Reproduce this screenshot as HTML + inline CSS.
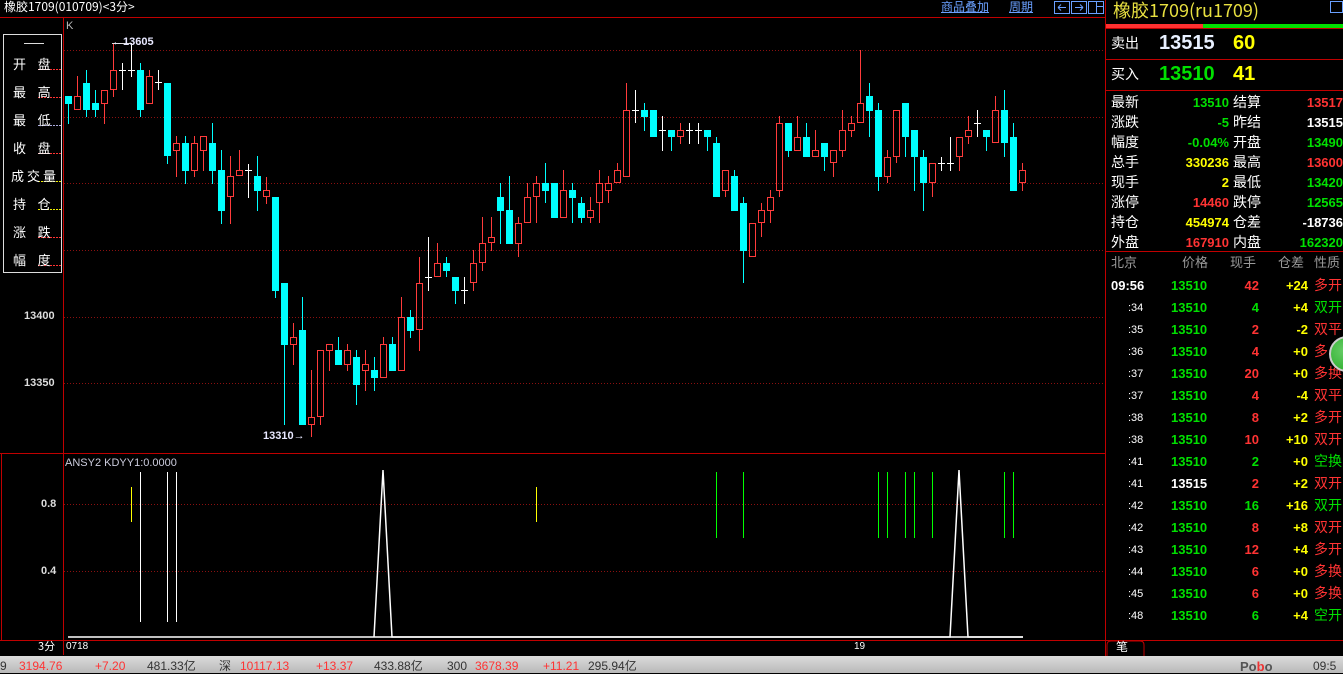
<!DOCTYPE html>
<html><head><meta charset="utf-8">
<style>
*{margin:0;padding:0;box-sizing:border-box}
body{width:1343px;height:673px;background:#000;overflow:hidden;position:relative;font-family:"Liberation Sans","Noto Sans CJK SC",sans-serif;color:#fff}
.a{position:absolute;white-space:nowrap;line-height:1}
.cjk{font-family:"Noto Sans CJK SC","WenQuanYi Zen Hei",sans-serif}
.num{font-family:"Liberation Sans",sans-serif;font-weight:bold}
.g{color:#00e000}.r{color:#ff3333}.y{color:#ffff00}.w{color:#fff}.gr{color:#9a9a9a}
</style></head><body>
<svg id="s" class="a" style="left:0;top:0" width="1343" height="673" xmlns="http://www.w3.org/2000/svg"></svg>

<div class="a cjk" style="left:4px;top:1px;font-size:12px">橡胶1709(010709)&lt;3分&gt;</div>
<div class="a cjk" style="left:941px;top:1px;font-size:12px;color:#6aa0ff;text-decoration:underline">商品叠加</div>
<div class="a cjk" style="left:1009px;top:1px;font-size:12px;color:#6aa0ff;text-decoration:underline">周期</div>
<div class="a" style="left:66px;top:21px;font-size:11px;color:#bbb">K</div>
<div class="a num" style="left:112px;top:37px;font-size:11px;color:#e8e8ff">←13605</div>
<div class="a num" style="left:263px;top:431px;font-size:11px;color:#e8e8ff">13310→</div>
<div class="a num" style="left:24px;top:311px;font-size:11px;color:#ddd">13400</div>
<div class="a num" style="left:24px;top:378px;font-size:11px;color:#ddd">13350</div>
<div class="a num" style="left:41px;top:499px;font-size:11px;color:#ddd">0.8</div>
<div class="a num" style="left:41px;top:566px;font-size:11px;color:#ddd">0.4</div>
<div class="a" style="left:65px;top:458px;font-size:11px;color:#ccd">ANSY2 KDYY1:0.0000</div>
<div class="a cjk" style="left:38px;top:641px;font-size:11px">3分</div>
<div class="a" style="left:66px;top:642px;font-size:10px">0718</div>
<div class="a" style="left:854px;top:642px;font-size:10px">19</div>

<div class="a cjk" style="left:13px;top:50px;font-size:13px;line-height:28px;letter-spacing:0">
<div>开&nbsp;&nbsp;&nbsp;&nbsp;盘</div><div>最&nbsp;&nbsp;&nbsp;&nbsp;高</div><div>最&nbsp;&nbsp;&nbsp;&nbsp;低</div><div>收&nbsp;&nbsp;&nbsp;&nbsp;盘</div><div style="margin-left:-2px;letter-spacing:3px">成交量</div><div>持&nbsp;&nbsp;&nbsp;&nbsp;仓</div><div>涨&nbsp;&nbsp;&nbsp;&nbsp;跌</div><div>幅&nbsp;&nbsp;&nbsp;&nbsp;度</div></div>

<div class="a cjk" style="left:1113px;top:1px;font-size:18px;color:#e8e040">橡胶1709(ru1709)</div>
<div class="a cjk" style="left:1111px;top:36px;font-size:14px">卖出</div>
<div class="a num" style="left:1159px;top:33px;font-size:20px;color:#e8f0ff">13515</div>
<div class="a num y" style="left:1233px;top:33px;font-size:20px">60</div>
<div class="a cjk" style="left:1111px;top:67px;font-size:14px">买入</div>
<div class="a num g" style="left:1159px;top:64px;font-size:20px">13510</div>
<div class="a num y" style="left:1233px;top:64px;font-size:20px">41</div>
<div class="a" style="left:1110px;top:93px;width:233px;font-size:14px;line-height:20px" id="stats"></div>
<div class="a cjk gr" style="left:1111px;top:255px;font-size:13px">北京</div>
<div class="a cjk gr" style="left:1182px;top:255px;font-size:13px">价格</div>
<div class="a cjk gr" style="left:1230px;top:255px;font-size:13px">现手</div>
<div class="a cjk gr" style="left:1278px;top:255px;font-size:13px">仓差</div>
<div class="a cjk gr" style="left:1314px;top:255px;font-size:13px">性质</div>
<div class="a" style="left:1108px;top:276px;width:235px;font-size:13px;line-height:22px" id="trades"></div>
<div class="a" style="left:1329px;top:336px;width:36px;height:36px;border-radius:50%;background:radial-gradient(circle at 40% 40%,#6c6,#2a2);border:2px solid #ccc"></div>
<div class="a cjk" style="left:1116px;top:641px;font-size:12px">笔</div>

<div class="a" style="left:0;top:656px;width:1343px;height:17px;background:linear-gradient(#dcdcdc,#b8b8b8)"></div>
<div class="a num" style="left:0;top:660px;font-size:12px;font-weight:normal;width:1343px">
<span class="a" style="left:0;color:#333">9</span>
<span class="a r" style="left:19px">3194.76</span>
<span class="a r" style="left:95px">+7.20</span>
<span class="a" style="left:147px;color:#333">481.33<span class="cjk">亿</span></span>
<span class="a cjk" style="left:219px;color:#333">深</span>
<span class="a r" style="left:240px">10117.13</span>
<span class="a r" style="left:316px">+13.37</span>
<span class="a" style="left:374px;color:#333">433.88<span class="cjk">亿</span></span>
<span class="a" style="left:447px;color:#333">300</span>
<span class="a r" style="left:475px">3678.39</span>
<span class="a r" style="left:543px">+11.21</span>
<span class="a" style="left:588px;color:#333">295.94<span class="cjk">亿</span></span>
<span class="a" style="left:1240px;color:#555;font-weight:bold;font-size:13px">Po<span style="color:#e33">b</span>o</span>
<span class="a" style="left:1313px;color:#333">09:5</span>
</div>

<script>
var s=document.getElementById('s'),h='';
function L(x1,y1,x2,y2,c,w,d){h+='<line x1="'+x1+'" y1="'+y1+'" x2="'+x2+'" y2="'+y2+'" stroke="'+c+'" stroke-width="'+(w||1)+'"'+(d?' stroke-dasharray="'+d+'"':'')+'/>';}
function R(x,y,w,hh,f,st){h+='<rect x="'+x+'" y="'+y+'" width="'+w+'" height="'+hh+'" fill="'+(f||'none')+'"'+(st?' stroke="'+st+'"':'')+'/>';}
[50,117,183,250,317,383,504,571].forEach(function(y){L(64,y+.5,1105,y+.5,'#8b1010',1,'1 2');});
var red='#c00000';
L(0,17.5,1105,17.5,red);L(63.5,18,63.5,655,red);L(0,453.5,1105,453.5,red);L(0,640.5,1105,640.5,red);
L(1105.5,0,1105.5,673,red);L(1.5,453,1.5,640,red);
R(3.5,34.5,58,238,null,'#ddd');
L(24,43.5,44,43.5,'#ddd');
var legc=['#f33','#f33','#aad','#f33','#ee0','#ee0','#f33','#f33'];
legc.forEach(function(c,i){L(38,69.5+i*28,61,69.5+i*28,c,1,'2 1');});
R(1106,24,97,4,'#ff3030');R(1203,24,140,4,'#00e000');
[28,59,90,251].forEach(function(y){L(1106,y+.5,1343,y+.5,red);});
L(1106,640.5,1343,640.5,red);
h+='<path d="M1107 656V645Q1107 641 1111 641H1140Q1144 641 1144 645V656" fill="none" stroke="'+red+'"/>';
[1054,1071,1088].forEach(function(x){R(x+.5,1.5,15,12,null,'#6aa0ff');});
h+='<path d="M1058 7.5h8M1058 7.5l3-3M1058 7.5l3 3M1083 7.5h-8M1083 7.5l-3-3M1083 7.5l-3 3" stroke="#6aa0ff" fill="none"/>';
L(1096.5,2,1096.5,13,'#6aa0ff');L(1096,6.5,1103,6.5,'#6aa0ff');
R(1330.5,1.5,12,11,null,'#6aa0ff');
var C=[['c',96,104,96,124],['r',96,110,76,110],['c',83,110,70,117],['c',103,110,90,117],['r',90,104,90,124],['r',70,90,43,97],['w',70,70,63,90],['w',70,70,43,77],['c',70,110,63,117],['r',76,104,70,104],['w',82,82,70,90],['c',83,156,83,164],['r',143,151,136,177],['c',143,171,136,184],['r',143,171,136,177],['r',136,151,136,171],['c',143,171,123,184],['c',170,211,150,224],['r',176,197,156,224],['r',170,176,150,176],['w',170,170,164,198],['c',176,191,156,211],['r',190,197,177,204],['c',197,291,197,298],['c',283,345,283,425],['r',337,345,323,365],['c',330,425,297,425],['r',417,425,370,437],['r',350,417,350,425],['r',344,351,344,371],['c',350,365,337,365],['r',350,365,344,371],['c',357,385,350,405],['r',364,371,350,391],['c',370,378,357,391],['r',344,378,337,378],['c',344,371,337,371],['r',317,371,297,371],['c',317,331,310,338],['r',283,330,257,351],['w',277,277,237,291],['r',263,277,243,277],['c',263,271,257,277],['c',277,291,277,304],['w',290,290,277,304],['r',263,283,250,291],['r',243,263,217,271],['r',237,243,217,251],['c',197,211,183,244],['c',210,244,176,244],['r',223,244,217,257],['r',197,223,183,223],['r',183,197,176,223],['c',183,191,163,203],['c',183,218,183,218],['r',190,218,170,218],['c',190,198,183,223],['c',203,218,197,223],['r',210,218,197,223],['r',183,203,170,223],['r',183,191,176,203],['r',170,183,163,183],['r',110,177,83,177],['w',110,110,90,123],['c',110,117,103,131],['c',110,137,110,137],['w',130,130,116,151],['c',130,137,130,151],['r',130,137,123,144],['w',130,130,123,144],['w',130,130,123,144],['c',130,137,130,151],['c',143,197,137,197],['r',170,191,170,197],['c',176,211,170,211],['c',203,251,197,283],['r',223,257,223,257],['r',210,223,203,237],['r',197,211,190,223],['r',123,191,116,197],['c',123,151,123,157],['r',137,151,116,151],['c',137,157,123,157],['r',150,157,130,157],['c',143,157,143,171],['r',150,163,150,177],['r',130,151,110,157],['r',123,131,116,137],['r',103,123,50,123],['c',96,111,83,137],['c',110,177,103,191],['r',157,177,150,183],['r',110,157,110,163],['c',103,137,103,157],['c',130,157,130,191],['c',157,183,150,211],['r',163,183,163,197],['w',163,163,157,171],['w',163,163,137,171],['r',137,157,137,171],['r',130,137,116,144],['w',123,123,110,137],['c',130,137,130,151],['r',110,143,96,143],['c',110,143,90,157],['c',137,191,123,191],['r',170,183,163,191]];
C.forEach(function(c,i){var x=68+9*i,t=c[0];
 if(t=='c'){L(x+.5,c[3],x+.5,c[4],'#00ffff');R(x-3,c[1],7,Math.max(c[2]-c[1],2),'#00ffff');}
 else if(t=='r'){L(x+.5,c[3],x+.5,c[1],'#ff3b3b');L(x+.5,c[2],x+.5,c[4],'#ff3b3b');R(x-2.5,c[1]+.5,6,Math.max(c[2]-c[1]-1,1),'none','#ff3b3b');}
 else{L(x+.5,c[3],x+.5,c[4],'#fff');L(x-3,c[1]+.5,x+4,c[1]+.5,'#fff');}
});
L(112,43.5,130,43.5,'#ddd');
h+='<polyline points="374,637 383,470 392,637 950,637 959,470 968,637 1023,637" fill="none" stroke="#fff" stroke-width="1.5"/>';
L(68,637,1023,637,'#fff',1.5);
[140,167,176].forEach(function(x){L(x+.5,472,x+.5,622,'#fff');});
[131,536].forEach(function(x){L(x+.5,487,x+.5,522,'#ff0');});
[716,743,878,887,905,914,932,1004,1013].forEach(function(x){L(x+.5,472,x+.5,538,'#00ff00');});
h+='<path d="M1284 660h10l-5 6zM1289 666v6" stroke="#444" fill="none"/>';
[1296,1299,1302].forEach(function(x,i){R(x,669-i*3,2,4+i*3,'#555');});
s.innerHTML=h;

var st=[['最新','13510','g','结算','13517','r'],['涨跌','-5','g','昨结','13515','w'],['幅度','-0.04%','g','开盘','13490','g'],['总手','330236','y','最高','13600','r'],['现手','2','y','最低','13420','g'],['涨停','14460','r','跌停','12565','g'],['持仓','454974','y','仓差','-18736','w'],['外盘','167910','r','内盘','162320','g']];
var o='';st.forEach(function(r){o+='<div style="position:relative;height:20px"><span class="a cjk" style="left:1px;top:2px">'+r[0]+'</span><span class="a num '+r[2]+'" style="right:114px;top:3px;font-size:13px">'+r[1]+'</span><span class="a cjk" style="left:123px;top:2px">'+r[3]+'</span><span class="a num '+r[5]+'" style="right:0;top:3px;font-size:13px">'+r[4]+'</span></div>';});
document.getElementById('stats').innerHTML=o;
var tr=[['09:56','13510','42','+24','多开','r','r'],[':34','13510','4','+4','双开','g','g'],[':35','13510','2','-2','双平','r','r'],[':36','13510','4','+0','多','r','r'],[':37','13510','20','+0','多换','r','r'],[':37','13510','4','-4','双平','r','r'],[':38','13510','8','+2','多开','r','r'],[':38','13510','10','+10','双开','r','r'],[':41','13510','2','+0','空换','g','g'],[':41','13515','2','+2','双开','r','r'],[':42','13510','16','+16','双开','g','g'],[':42','13510','8','+8','双开','r','r'],[':43','13510','12','+4','多开','r','r'],[':44','13510','6','+0','多换','r','r'],[':45','13510','6','+0','多换','r','r'],[':48','13510','6','+4','空开','g','g']];
o='';tr.forEach(function(r,i){var pc=r[1]=='13515'?'w':'g';o+='<div style="position:relative;height:22px">'+(i==0?'<span class="a num" style="left:3px;top:3px;font-size:13px">09:56</span>':'<span class="a" style="left:20px;top:5px;font-size:11px">'+r[0]+'</span>')+'<span class="a num '+pc+'" style="left:63px;top:3px;font-size:13px">'+r[1]+'</span><span class="a num '+r[5]+'" style="right:84px;top:3px;font-size:13px">'+r[2]+'</span><span class="a num y" style="right:35px;top:3px;font-size:13px">'+r[3]+'</span><span class="a cjk '+r[6]+'" style="left:206px;top:2px;font-size:14px">'+r[4]+'</span></div>';});
document.getElementById('trades').innerHTML=o;
</script>
</body></html>
